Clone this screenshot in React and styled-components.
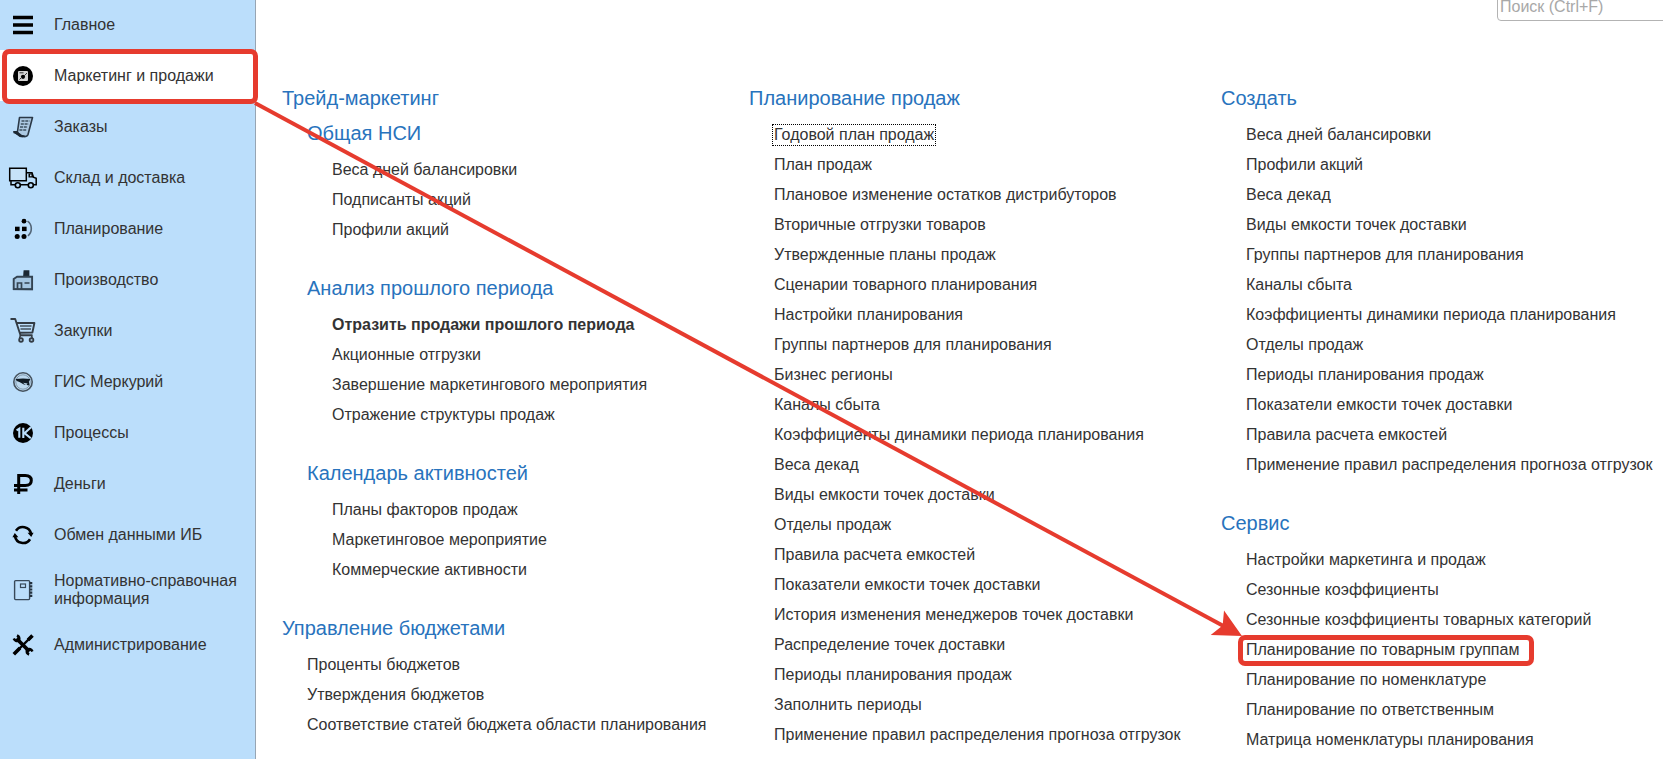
import React, { useLayoutEffect, useRef, useState } from "react";
import styled, { createGlobalStyle, css } from "styled-components";

const RED = "#e63b2e";

const GlobalStyle = createGlobalStyle`
  *, *::before, *::after { box-sizing: border-box; }
  body {
    margin: 0;
    background: #fff;
    color: #333;
    font: 16px/18px "Liberation Sans", Arial, sans-serif;
  }
  a { color: inherit; text-decoration: none; }
  ul { list-style: none; margin: 0; padding: 0; }
`;

const Page = styled.div`
  position: relative;
  display: flex;
  min-height: 100vh;
  overflow: hidden;
`;

const Sidebar = styled.nav`
  flex: none;
  width: 256px;
  background: #bbdefb;
  border-right: 1px solid #97a5b3;
`;

const SectionList = styled.ul`
  margin-top: -1px;
`;

const markFrame = css`
  &::after {
    content: "";
    position: absolute;
    border: 5px solid ${RED};
    border-radius: 7px;
    pointer-events: none;
  }
`;

const SectionLink = styled.a`
  position: relative;
  display: flex;
  align-items: center;
  min-height: 51px;
  padding: 0 8px 0 9px;
  gap: 17px;
  ${({ $tall }) => $tall && "min-height: 59px;"}
  ${({ $active }) =>
    $active &&
    css`
      background: #fff;
      ${markFrame}
      &::after { inset: -1px -3px -3px 2px; }
    `}
`;

const Icon = styled.svg`
  flex: none;
  width: 28px;
  height: 28px;
  overflow: visible;
`;

const Main = styled.main`
  flex: 1;
  min-width: 0;
`;

const TopBar = styled.form`
  display: flex;
  justify-content: flex-end;
  align-items: flex-end;
  height: 21px;
  overflow: hidden;
`;

const SearchBox = styled.input`
  flex: none;
  width: 186px;
  height: 29px;
  margin-right: -20px;
  padding: 0 2px;
  border: 1px solid #b3b3b3;
  border-radius: 4px;
  background: #fff;
  font: inherit;
  color: #333;
  &::placeholder { color: #a8a8a8; opacity: 1; }
`;

const Columns = styled.div`
  display: grid;
  grid-template-columns: minmax(0, 467fr) minmax(0, 472fr) minmax(0, 442fr);
  padding: 63px 0 0 26px;
`;

const Column = styled.div`
  display: flex;
  flex-direction: column;
  gap: 30px;
`;

const Group = styled.section`
  white-space: nowrap;
`;

const Title = styled.h2`
  margin: 0 0 7px;
  font-size: 20px;
  line-height: 28px;
  font-weight: 400;
  color: #2873bd;
`;

const Subgroups = styled.div`
  display: flex;
  flex-direction: column;
  gap: 30px;
  padding-left: 25px;
`;

const Links = styled.ul`
  padding-left: 25px;
`;

const LinkRow = styled.li`
  display: flex;
  align-items: center;
  height: 30px;
  padding-top: 2px;
`;

const CommandLink = styled.a`
  position: relative;
  font-weight: ${({ $bold }) => ($bold ? 700 : 400)};
  ${({ $focused }) =>
    $focused &&
    css`
      outline: 1px dotted #000;
      outline-offset: 1px;
    `}
  ${({ $marked }) =>
    $marked &&
    css`
      ${markFrame}
      &::after { inset: -6px -15px -7px -8px; }
    `}
`;

const Arrow = styled.svg`
  position: absolute;
  inset: 0;
  width: 100%;
  height: 100%;
  pointer-events: none;
`;

const icons = {
  menu: <path d="M4 6.5h20M4 14h20M4 21.5h20" stroke="#000" strokeWidth="3.4" />,
  marketing: (
    <>
      <circle cx="14" cy="14" r="10" fill="#000" />
      <rect x="9" y="9" width="10" height="10" rx="1" fill="#d5d5d5" />
      <circle cx="14" cy="14.8" r="2.1" fill="#000" />
      <path d="M15 14l3-3M10.5 17.5l2-2M10.5 10.8h4" stroke="#333" strokeWidth="1" />
    </>
  ),
  orders: (
    <>
      <path d="M10.5 4.5h13l-4.5 17q-1 2.5-5 2l-9-4 3.5-1z" fill="#acc9e2" stroke="#2b3947" strokeWidth="1.6" strokeLinejoin="round" />
      <path d="M4.5 18.5q4-.5 6 2t5 2.5q-2 1.5-5 .5z" fill="#1d2833" stroke="#1d2833" />
      <path d="M12.5 8h8M11.8 11h7.8M11 14h7.7M10.4 17h7" stroke="#3d5060" strokeWidth="1.4" strokeDasharray="3 .8" />
    </>
  ),
  truck: (
    <>
      <path d="M.7 4.2h16.6v12.6H.7z" fill="#c7e2f8" stroke="#000" strokeWidth="1.5" />
      <path d="M2 17v3.8h4m5 0h8m5 0h3.2v-6.5l-2.8-1.2-1.4-4.3h-5.7" fill="none" stroke="#000" strokeWidth="1.5" />
      <path d="M19.5 9.5h4l1 4h-5z" fill="#000" />
      <path d="M21 10.5h1.5v1.7H21z" fill="#c7e2f8" />
      <g fill="#bbdefb" stroke="#000" strokeWidth="1.6">
        <circle cx="8.8" cy="21.2" r="2.5" />
        <circle cx="21.8" cy="21.2" r="2.5" />
      </g>
    </>
  ),
  planning: (
    <>
      <g fill="#000">
        <circle cx="15" cy="6.2" r="2.4" />
        <rect x="6" y="11.7" width="4.6" height="4.4" />
        <rect x="13" y="11.7" width="4.6" height="4.4" />
        <circle cx="8.2" cy="21.5" r="2.5" />
        <circle cx="15" cy="21.5" r="2.5" />
      </g>
      <path d="M18.5 6.2q3.8 2.5 3.8 7.4t-3.4 7.2" fill="none" stroke="#526577" strokeWidth="1.6" />
    </>
  ),
  factory: (
    <>
      <path d="M14 12l.6-7.8h5.8V12z" fill="#1b2733" />
      <path d="M4.7 23V13l3.4-2.2h15v12.4z" fill="#a5c6e2" stroke="#334352" strokeWidth="1.9" />
      <path d="M4 23.3h20" stroke="#334352" strokeWidth="1.6" />
      <path d="M8.5 23v-6h4v6M15.5 17h5" fill="none" stroke="#334352" strokeWidth="1.7" />
    </>
  ),
  cart: (
    <>
      <path d="M1.5 2h4.7l5.3 16.2h12M7.4 6h18l-2 9.5-12.6.3" fill="none" stroke="#333c45" strokeWidth="1.9" strokeLinejoin="round" />
      <path d="M11 9h11.5M11.5 12h10.5" stroke="#46535f" strokeWidth="1.6" />
      <path d="M11.5 18.2l-1 3M22.5 18.2l.7 3" stroke="#333c45" strokeWidth="1.5" />
      <circle cx="12" cy="23" r="1.9" fill="#9ebad0" stroke="#333c45" strokeWidth="1.7" />
      <circle cx="22.5" cy="23" r="1.9" fill="#9ebad0" stroke="#333c45" strokeWidth="1.7" />
    </>
  ),
  mercury: (
    <>
      <circle cx="14" cy="14" r="9.2" fill="#bdd9ef" stroke="#46535f" strokeWidth="1.6" />
      <circle cx="14" cy="14" r="7.2" fill="none" stroke="#71889b" strokeWidth=".8" />
      <path d="M6.5 11q7.5-1.2 15 0l-1.6 2.6.6 4-5.6-1-4.5-2.6q-3.2-.6-3.9-3z" fill="#111b24" />
      <path d="M14 14.8l4.6.6-1.4 1.8z" fill="#bdd9ef" />
    </>
  ),
  processes: (
    <>
      <circle cx="14" cy="14" r="10" fill="#000" />
      <path d="M7.6 11.3l2.7-1.7v9.2M14.3 8.8v10.2M22 8.2l-6.5 5.9 6.3 5.2" fill="none" stroke="#bbdefb" strokeWidth="2.1" />
    </>
  ),
  ruble: (
    <path d="M9.7 24V5.5h6.6q6 0 6 5t-6 5H5M5 20h13.5" fill="none" stroke="#000" strokeWidth="3" />
  ),
  exchange: (
    <>
      <path d="M7 9.8A8.2 8.2 0 0 1 22 12.8M21 18.2A8.2 8.2 0 0 1 6 15.2" fill="none" stroke="#000" strokeWidth="2.6" />
      <path d="M18.6 11.8h6l-2.4 4.2zM9.4 16.2h-6L5.800 12z" fill="#000" />
    </>
  ),
  reference: (
    <>
      <rect x="5.6" y="4.6" width="15" height="19" rx="1" fill="none" stroke="#384959" strokeWidth="1.4" />
      <rect x="11.5" y="8" width="5" height="3.5" fill="none" stroke="#384959" strokeWidth="1.2" />
      <path d="M22 6v15" stroke="#24323f" strokeWidth="2.6" strokeDasharray="2.2 1" />
    </>
  ),
  tools: (
    <>
      <path d="M23 5L6 22" stroke="#000" strokeWidth="2.4" />
      <path d="M11 17l-6.200 6.200M23.500 4.500l-4.500 4.500" stroke="#000" strokeWidth="3.6" />
      <path d="M7.500 7.500L20.500 20.500" stroke="#000" strokeWidth="3.8" />
      <path d="M4.800 7.500q1.500 3.500 5.200 1.800 1-3.500-2-4.800M23.400 20.500q-1.600-3.600-5.300-1.800-1.200 3.500 2 4.800" fill="none" stroke="#000" strokeWidth="2.600" />
    </>
  ),
};

const sections = [
  { icon: "menu", label: "Главное" },
  { icon: "marketing", label: "Маркетинг и продажи", active: true },
  { icon: "orders", label: "Заказы" },
  { icon: "truck", label: "Склад и доставка" },
  { icon: "planning", label: "Планирование" },
  { icon: "factory", label: "Производство" },
  { icon: "cart", label: "Закупки" },
  { icon: "mercury", label: "ГИС Меркурий" },
  { icon: "processes", label: "Процессы" },
  { icon: "ruble", label: "Деньги" },
  { icon: "exchange", label: "Обмен данными ИБ" },
  { icon: "reference", label: "Нормативно-справочная информация", tall: true },
  { icon: "tools", label: "Администрирование" },
];

const tradeMarketing = [
  { title: "Общая НСИ", links: ["Веса дней балансировки", "Подписанты акций", "Профили акций"] },
  {
    title: "Анализ прошлого периода",
    bold: "Отразить продажи прошлого периода",
    links: [
      "Отразить продажи прошлого периода",
      "Акционные отгрузки",
      "Завершение маркетингового мероприятия",
      "Отражение структуры продаж",
    ],
  },
  {
    title: "Календарь активностей",
    links: ["Планы факторов продаж", "Маркетинговое мероприятие", "Коммерческие активности"],
  },
];

const budgets = ["Проценты бюджетов", "Утверждения бюджетов", "Соответствие статей бюджета области планирования"];

const salesPlanning = [
  "Годовой план продаж",
  "План продаж",
  "Плановое изменение остатков дистрибуторов",
  "Вторичные отгрузки товаров",
  "Утвержденные планы продаж",
  "Сценарии товарного планирования",
  "Настройки планирования",
  "Группы партнеров для планирования",
  "Бизнес регионы",
  "Каналы сбыта",
  "Коэффициенты динамики периода планирования",
  "Веса декад",
  "Виды емкости точек доставки",
  "Отделы продаж",
  "Правила расчета емкостей",
  "Показатели емкости точек доставки",
  "История изменения менеджеров точек доставки",
  "Распределение точек доставки",
  "Периоды планирования продаж",
  "Заполнить периоды",
  "Применение правил распределения прогноза отгрузок",
];

const create = [
  "Веса дней балансировки",
  "Профили акций",
  "Веса декад",
  "Виды емкости точек доставки",
  "Группы партнеров для планирования",
  "Каналы сбыта",
  "Коэффициенты динамики периода планирования",
  "Отделы продаж",
  "Периоды планирования продаж",
  "Показатели емкости точек доставки",
  "Правила расчета емкостей",
  "Применение правил распределения прогноза отгрузок",
];

const service = [
  "Настройки маркетинга и продаж",
  "Сезонные коэффициенты",
  "Сезонные коэффициенты товарных категорий",
  "Планирование по товарным группам",
  "Планирование по номенклатуре",
  "Планирование по ответственным",
  "Матрица номенклатуры планирования",
];

function CommandGroup({ title, links, bold, focused, marked, markedRef, children }) {
  return (
    <Group>
      <Title>{title}</Title>
      {children}
      {links && (
        <Links>
          {links.map((label) => (
            <LinkRow key={label}>
              <CommandLink
                href="#"
                $bold={label === bold}
                $focused={label === focused}
                $marked={label === marked}
                ref={label === marked ? markedRef : undefined}
              >
                {label}
              </CommandLink>
            </LinkRow>
          ))}
        </Links>
      )}
    </Group>
  );
}

/* End points of the arrow, kept on the marked section and command as the page resizes. */
function useArrowLine(pageRef, fromRef, toRef) {
  const [line, setLine] = useState(null);

  useLayoutEffect(() => {
    const measure = () => {
      const page = pageRef.current.getBoundingClientRect();
      const from = fromRef.current.getBoundingClientRect();
      const to = toRef.current.getBoundingClientRect();
      setLine({
        x1: from.right - page.left,
        y1: from.bottom - page.top + 2,
        x2: to.left - page.left - 4,
        y2: to.top - page.top - 5,
      });
    };
    measure();
    window.addEventListener("resize", measure);
    return () => window.removeEventListener("resize", measure);
  }, [pageRef, fromRef, toRef]);

  return line;
}

function PointerArrow({ x1, y1, x2, y2 }) {
  const angle = (Math.atan2(y2 - y1, x2 - x1) * 180) / Math.PI;
  const length = Math.hypot(x2 - x1, y2 - y1);
  return (
    <Arrow aria-hidden="true">
      <g transform={`translate(${x2} ${y2}) rotate(${angle})`} fill={RED}>
        <path d={`M${-length} -2H-20V2H${-length}z`} />
        <path d="M0 0L-28 -14L-22 0L-28 14z" />
      </g>
    </Arrow>
  );
}

export default function App() {
  const pageRef = useRef(null);
  const fromRef = useRef(null);
  const toRef = useRef(null);
  const line = useArrowLine(pageRef, fromRef, toRef);

  return (
    <Page ref={pageRef}>
      <GlobalStyle />
      <Sidebar aria-label="Разделы">
        <SectionList>
          {sections.map(({ icon, label, active, tall }) => (
            <li key={label}>
              <SectionLink href="#" $active={active} $tall={tall} ref={active ? fromRef : undefined}>
                <Icon viewBox="0 0 28 28" aria-hidden="true">{icons[icon]}</Icon>
                <span>{label}</span>
              </SectionLink>
            </li>
          ))}
        </SectionList>
      </Sidebar>
      <Main>
        <TopBar role="search">
          <SearchBox type="search" aria-label="Поиск" placeholder="Поиск (Ctrl+F)" />
        </TopBar>
        <Columns>
          <Column>
            <CommandGroup title="Трейд-маркетинг">
              <Subgroups>
                {tradeMarketing.map((group) => (
                  <CommandGroup key={group.title} {...group} />
                ))}
              </Subgroups>
            </CommandGroup>
            <CommandGroup title="Управление бюджетами" links={budgets} />
          </Column>
          <Column>
            <CommandGroup title="Планирование продаж" links={salesPlanning} focused="Годовой план продаж" />
          </Column>
          <Column>
            <CommandGroup title="Создать" links={create} />
            <CommandGroup
              title="Сервис"
              links={service}
              marked="Планирование по товарным группам"
              markedRef={toRef}
            />
          </Column>
        </Columns>
      </Main>
      {line && <PointerArrow {...line} />}
    </Page>
  );
}
